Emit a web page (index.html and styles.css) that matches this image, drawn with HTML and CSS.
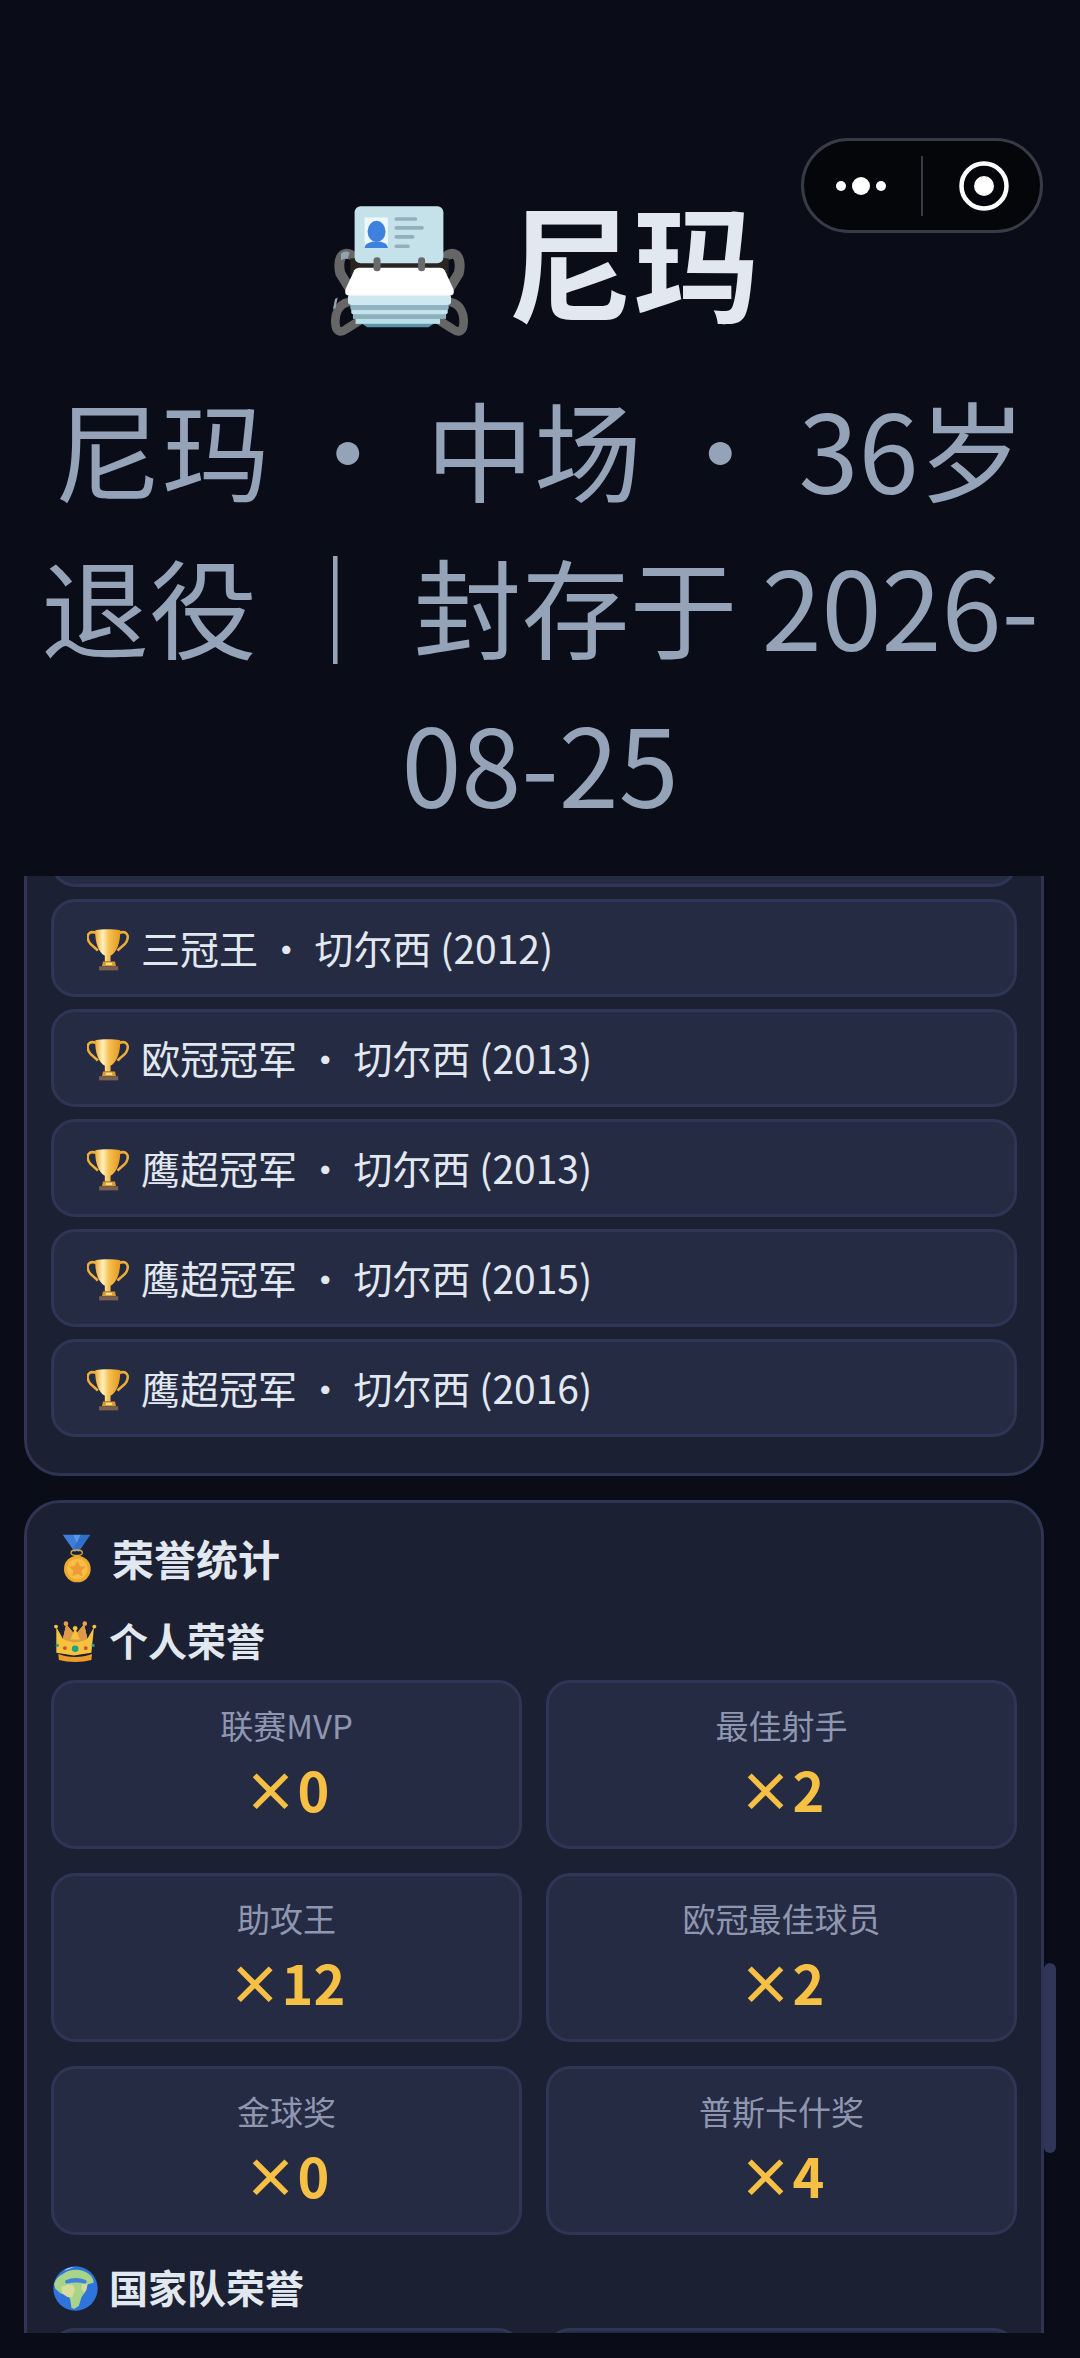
FILE: index.html
```html
<!DOCTYPE html>
<html lang="zh-CN">
<head>
  <meta charset="UTF-8">
  <title>尼玛</title>
  <link rel="stylesheet" href="styles.css">
</head>
<body>
<svg class="defs" width="0" height="0">
  <defs>
    <linearGradient id="cup" x1="0" x2="1" y1="0" y2="0">
      <stop offset="0" stop-color="#eeaa30"/>
      <stop offset=".3" stop-color="#fff0bd"/>
      <stop offset=".55" stop-color="#f6c050"/>
      <stop offset="1" stop-color="#e39a24"/>
    </linearGradient>
    <symbol id="trophy" viewBox="30 25 135 135">
      <path d="M62 42C36 30 26 48 36 68c6 12 20 18 28 28M128 42c26-12 36 6 26 26-6 12-20 18-28 28" fill="none" stroke="#eead38" stroke-width="8"/>
      <path d="M56 32c22-4 56-4 78 0 2 36-10 70-30 80v18H86v-18C66 102 54 68 56 32z" fill="url(#cup)"/>
      <path d="M80 130h38l3 15H77z" fill="#d99a30"/>
      <rect x="89" y="134" width="20" height="7" fill="#fbe08e"/>
      <rect x="68" y="145" width="60" height="13" fill="#795f50"/>
    </symbol>
  </defs>
</svg>

<div class="cap">
  <svg class="cap-dots" width="60" height="20" viewBox="0 0 60 20"><circle cx="10" cy="10" r="5"/><circle cx="30" cy="10" r="9"/><circle cx="50" cy="10" r="5"/></svg>
  <span class="cap-line"></span>
  <svg class="cap-target" width="52" height="52" viewBox="0 0 52 52"><circle cx="26" cy="26" r="22.5" fill="none" stroke="#fff" stroke-width="4.5"/><circle cx="26" cy="26" r="10" fill="#fff"/></svg>
</div>

<div class="head">
  <h1 class="title">
    <svg class="title-icon" width="137" height="130" viewBox="34 33 412 390">
      <g fill="none" stroke="#666" stroke-linecap="round">
        <path d="M95 180C62 165 54 200 62 235l28 45" stroke-width="30"/>
        <path d="M85 322c-28 6-42 36-37 70 3 20 17 22 33 10l44-28" stroke-width="26"/>
        <path d="M64 176c8-8 18-8 26-4l-6 20c-8-2-14 0-20 4z" fill="#8ea4b0" stroke="none"/>
        <path d="M46 312l8-4-6 32-8 2z" fill="#90a4ae" stroke="none"/>
      </g>
      <g fill="none" stroke="#666" stroke-linecap="round">
        <path d="M385 180c33-15 41 20 33 55l-28 45" stroke-width="30"/>
        <path d="M395 322c28 6 42 36 37 70-3 20-17 22-33 10l-44-28" stroke-width="26"/>
      </g>
      <rect x="92" y="190" width="296" height="50" fill="#2a2523"/>
      <rect x="105" y="33" width="267" height="172" rx="18" fill="#c5e2ea"/>
      <rect x="135" y="67" width="70" height="92" fill="#eef7fa"/>
      <ellipse cx="171" cy="109" rx="27" ry="32" fill="#3f82dd"/>
      <path d="M135 159c0-15 20-20 36-20s34 5 34 20z" fill="#3f82dd"/>
      <rect x="225" y="66" width="68" height="11" rx="5" fill="#92b0bc"/>
      <rect x="225" y="93" width="88" height="11" rx="5" fill="#92b0bc"/>
      <rect x="225" y="120" width="60" height="11" rx="5" fill="#92b0bc"/>
      <rect x="225" y="148" width="46" height="11" rx="5" fill="#92b0bc"/>
      <path d="M125 385h220l-18 12H143z" fill="#5f94a6"/>
      <rect x="108" y="370" width="254" height="17" fill="#b9dfe9"/>
      <rect x="100" y="356" width="280" height="16" fill="#8db0bf"/>
      <rect x="95" y="340" width="290" height="18" rx="6" fill="#c5e2ea"/>
      <rect x="92" y="325" width="296" height="20" rx="6" fill="#8fb3c2"/>
      <rect x="85" y="298" width="310" height="32" rx="10" fill="#cfe8f0"/>
      <path d="M118 218h244q10 0 14 8l26 56q6 20-12 20H90q-18 0-12-20l26-56q4-8 14-8z" fill="#fff"/>
      <rect x="162" y="187" width="21" height="42" rx="10" fill="#6a6a6a"/>
      <rect x="296" y="187" width="21" height="42" rx="10" fill="#6a6a6a"/>
    </svg>
    <span class="title-text">尼玛</span>
  </h1>
  <p class="sub">尼玛 · 中场 · 36岁 退役 ｜ 封存于 2026-08-25</p>
</div>

<div class="scroll">
  <div class="scroll-inner">
    <section class="card">
      <div class="row"></div>
      <div class="row"><svg class="cup" width="43" height="43"><use href="#trophy"/></svg>三冠王 · 切尔西 (2012)</div>
      <div class="row"><svg class="cup" width="43" height="43"><use href="#trophy"/></svg>欧冠冠军 · 切尔西 (2013)</div>
      <div class="row"><svg class="cup" width="43" height="43"><use href="#trophy"/></svg>鹰超冠军 · 切尔西 (2013)</div>
      <div class="row"><svg class="cup" width="43" height="43"><use href="#trophy"/></svg>鹰超冠军 · 切尔西 (2015)</div>
      <div class="row"><svg class="cup" width="43" height="43"><use href="#trophy"/></svg>鹰超冠军 · 切尔西 (2016)</div>
    </section>

    <section class="card">
      <h2 class="card-title">
        <svg class="medal" width="30" height="49" viewBox="50 20 90 147">
          <path d="M52 22h30l22 42-16 10z" fill="#3f7ed8"/>
          <path d="M135 22h-30L84 64l16 10z" fill="#2f6fc9"/>
          <path d="M82 22h24L94 48z" fill="#5a97e6"/>
          <ellipse cx="94" cy="76" rx="17" ry="8" fill="none" stroke="#d9a640" stroke-width="4"/>
          <circle cx="96" cy="125" r="40" fill="#f0a92e"/>
          <circle cx="96" cy="125" r="31" fill="#f9bf45"/>
          <path d="M96 100l7.500 16 17.500 2-13 12 3.500 17.500L96 139l-15.500 8.500L84 130l-13-12 17.500-2z" fill="#ee9a36"/>
        </svg>
        荣誉统计
      </h2>

      <h3 class="group">
        <svg class="group-icon" width="45" height="43" viewBox="24 275 136 130">
          <path d="M34 296l20 36 10-44 27 32 27-32 10 44 20-36-8 78-53 8-53-8z" fill="#f7c23c"/>
          <path d="M64 288l27 32 27-32 10 44c-22 14-52 14-74 0z" fill="#dd9a48"/>
          <path d="M91 298l14 36H77z" fill="#f7c23c"/>
          <circle cx="33" cy="295" r="6" fill="#f7c23c"/>
          <circle cx="63" cy="286" r="7" fill="#e8a04a"/>
          <circle cx="91" cy="300" r="7" fill="#f7c23c"/>
          <circle cx="120" cy="286" r="7" fill="#e8a04a"/>
          <circle cx="149" cy="295" r="6" fill="#f7c23c"/>
          <path d="M40 378c30 12 72 12 102 0l-2 18c-30 8-68 8-98 0z" fill="#ec9c2a"/>
          <circle cx="91" cy="362" r="10" fill="#1fa387"/>
          <circle cx="60" cy="360" r="6" fill="#d64b35"/>
          <circle cx="123" cy="360" r="6" fill="#d64b35"/>
          <circle cx="37" cy="352" r="5" fill="#1fa387"/>
          <circle cx="145" cy="352" r="5" fill="#1fa387"/>
        </svg>
        个人荣誉
      </h3>
      <div class="stats">
        <div class="stat"><div class="stat-name">联赛MVP</div><div class="stat-num">×0</div></div>
        <div class="stat"><div class="stat-name">最佳射手</div><div class="stat-num">×2</div></div>
        <div class="stat"><div class="stat-name">助攻王</div><div class="stat-num">×12</div></div>
        <div class="stat"><div class="stat-name">欧冠最佳球员</div><div class="stat-num">×2</div></div>
        <div class="stat"><div class="stat-name">金球奖</div><div class="stat-num">×0</div></div>
        <div class="stat"><div class="stat-name">普斯卡什奖</div><div class="stat-num">×4</div></div>
      </div>

      <h3 class="group group-next">
        <svg class="group-icon" width="45" height="45" viewBox="23 20 134 134">
          <circle cx="90" cy="87" r="66" fill="#2f74dc"/>
          <path d="M52 44c20-16 56-18 78 0 10 8 14 18 14 26l-18 4-6 22-12 16-8 26-14 10-8-4-4-26-8-14-20-2-16-14-4-14c4-14 14-24 26-30z" fill="#a8d48a"/>
          <path d="M62 62c18-8 40-8 58 0 6 4 4 12-4 10-16-4-34-4-50 0-6 2-10-6-4-10z" fill="#3f82dd"/>
          <path d="M48 82l22-8 14 4 4 14-8 22-14-2-16-10z" fill="#d6dc9c"/>
          <path d="M110 74l16 0-4 18-8 6-6-12z" fill="#d6dc9c"/>
          <path d="M56 34c8-6 18-10 30-10-10 3-20 6-30 10z" fill="#fff"/>
        </svg>
        国家队荣誉
      </h3>
      <div class="stats">
        <div class="stat"></div>
        <div class="stat"></div>
      </div>
    </section>
  </div>
  <div class="bar"></div>
</div>
</body>
</html>
```

FILE: styles.css
```css
* {
  box-sizing: border-box;
  margin: 0;
  padding: 0;
}

html,
body {
  width: 1080px;
  height: 2358px;
  overflow: hidden;
}

body {
  position: relative;
  background: #0a0c17;
  font-family: "Noto Sans CJK SC", "Noto Sans", sans-serif;
  color: #e2e8f0;
}

.defs {
  position: absolute;
}

/* 小程序胶囊 */
.cap {
  position: absolute;
  left: 801px;
  top: 138px;
  width: 242px;
  height: 95px;
  display: flex;
  align-items: center;
  background: #05060a;
  border: 3px solid #383b46;
  border-radius: 48px;
}

.cap-dots {
  margin-left: 27px;
  fill: #fff;
}

.cap-line {
  width: 2px;
  height: 60px;
  margin-left: 30px;
  background: #383b46;
}

.cap-target {
  margin-left: 35px;
}

/* 头部 */
.head {
  height: 876px;
  padding: 198px 30px 0;
  text-align: center;
}

.title {
  display: flex;
  justify-content: center;
  align-items: center;
  gap: 40px;
  height: 146px;
  padding-left: 10px;
  font-size: 126px;
  font-weight: 700;
  line-height: 146px;
}

.title-text {
  padding-bottom: 26px;
}

.sub {
  margin-top: 25px;
  font-size: 108px;
  line-height: 157px;
  color: #94a3b8;
}

/* 滚动区 */
.scroll {
  position: relative;
  height: 1457px;
  overflow: hidden;
}

.scroll-inner {
  margin-top: -114px;
  padding-left: 24px;
}

.bar {
  position: absolute;
  left: 1044px;
  top: 1087px;
  width: 12px;
  height: 190px;
  background: #2f3658;
  border-radius: 6px;
}

.card {
  width: 1020px;
  margin-bottom: 24px;
  padding: 24px;
  background: #1b2033;
  border: 3px solid #2e3452;
  border-radius: 36px;
}

.row {
  display: flex;
  align-items: center;
  height: 98px;
  margin-bottom: 12px;
  padding-left: 33px;
  padding-bottom: 2px;
  background: #262b44;
  border: 3px solid #2f3554;
  border-radius: 24px;
  font-size: 39px;
}

.cup {
  margin-top: 4px;
  margin-right: 11px;
}

.card-title {
  display: flex;
  align-items: center;
  gap: 20px;
  height: 56px;
  margin-top: 2px;
  padding-left: 11px;
  font-size: 42px;
  font-weight: 700;
}

.medal {
  margin-top: 3px;
}

.group {
  display: flex;
  align-items: center;
  gap: 11px;
  height: 56px;
  margin-top: 26px;
  margin-bottom: 13px;
  padding-left: 2px;
  font-size: 39px;
  font-weight: 700;
}

.group-icon {
  margin-top: 4px;
}

.group-next {
  margin-top: 23px;
  margin-bottom: 14px;
}

.stats {
  display: grid;
  grid-template-columns: 1fr 1fr;
  gap: 24px;
}

.stat {
  height: 169px;
  padding-top: 17px;
  background: #262b44;
  border: 3px solid #2f3554;
  border-radius: 24px;
  text-align: center;
}

.stat-name {
  height: 50px;
  font-size: 33px;
  line-height: 50px;
  color: #8f97b0;
}

.stat-num {
  height: 78px;
  font-size: 54px;
  font-weight: 700;
  line-height: 78px;
  color: #f5c044;
}
```
